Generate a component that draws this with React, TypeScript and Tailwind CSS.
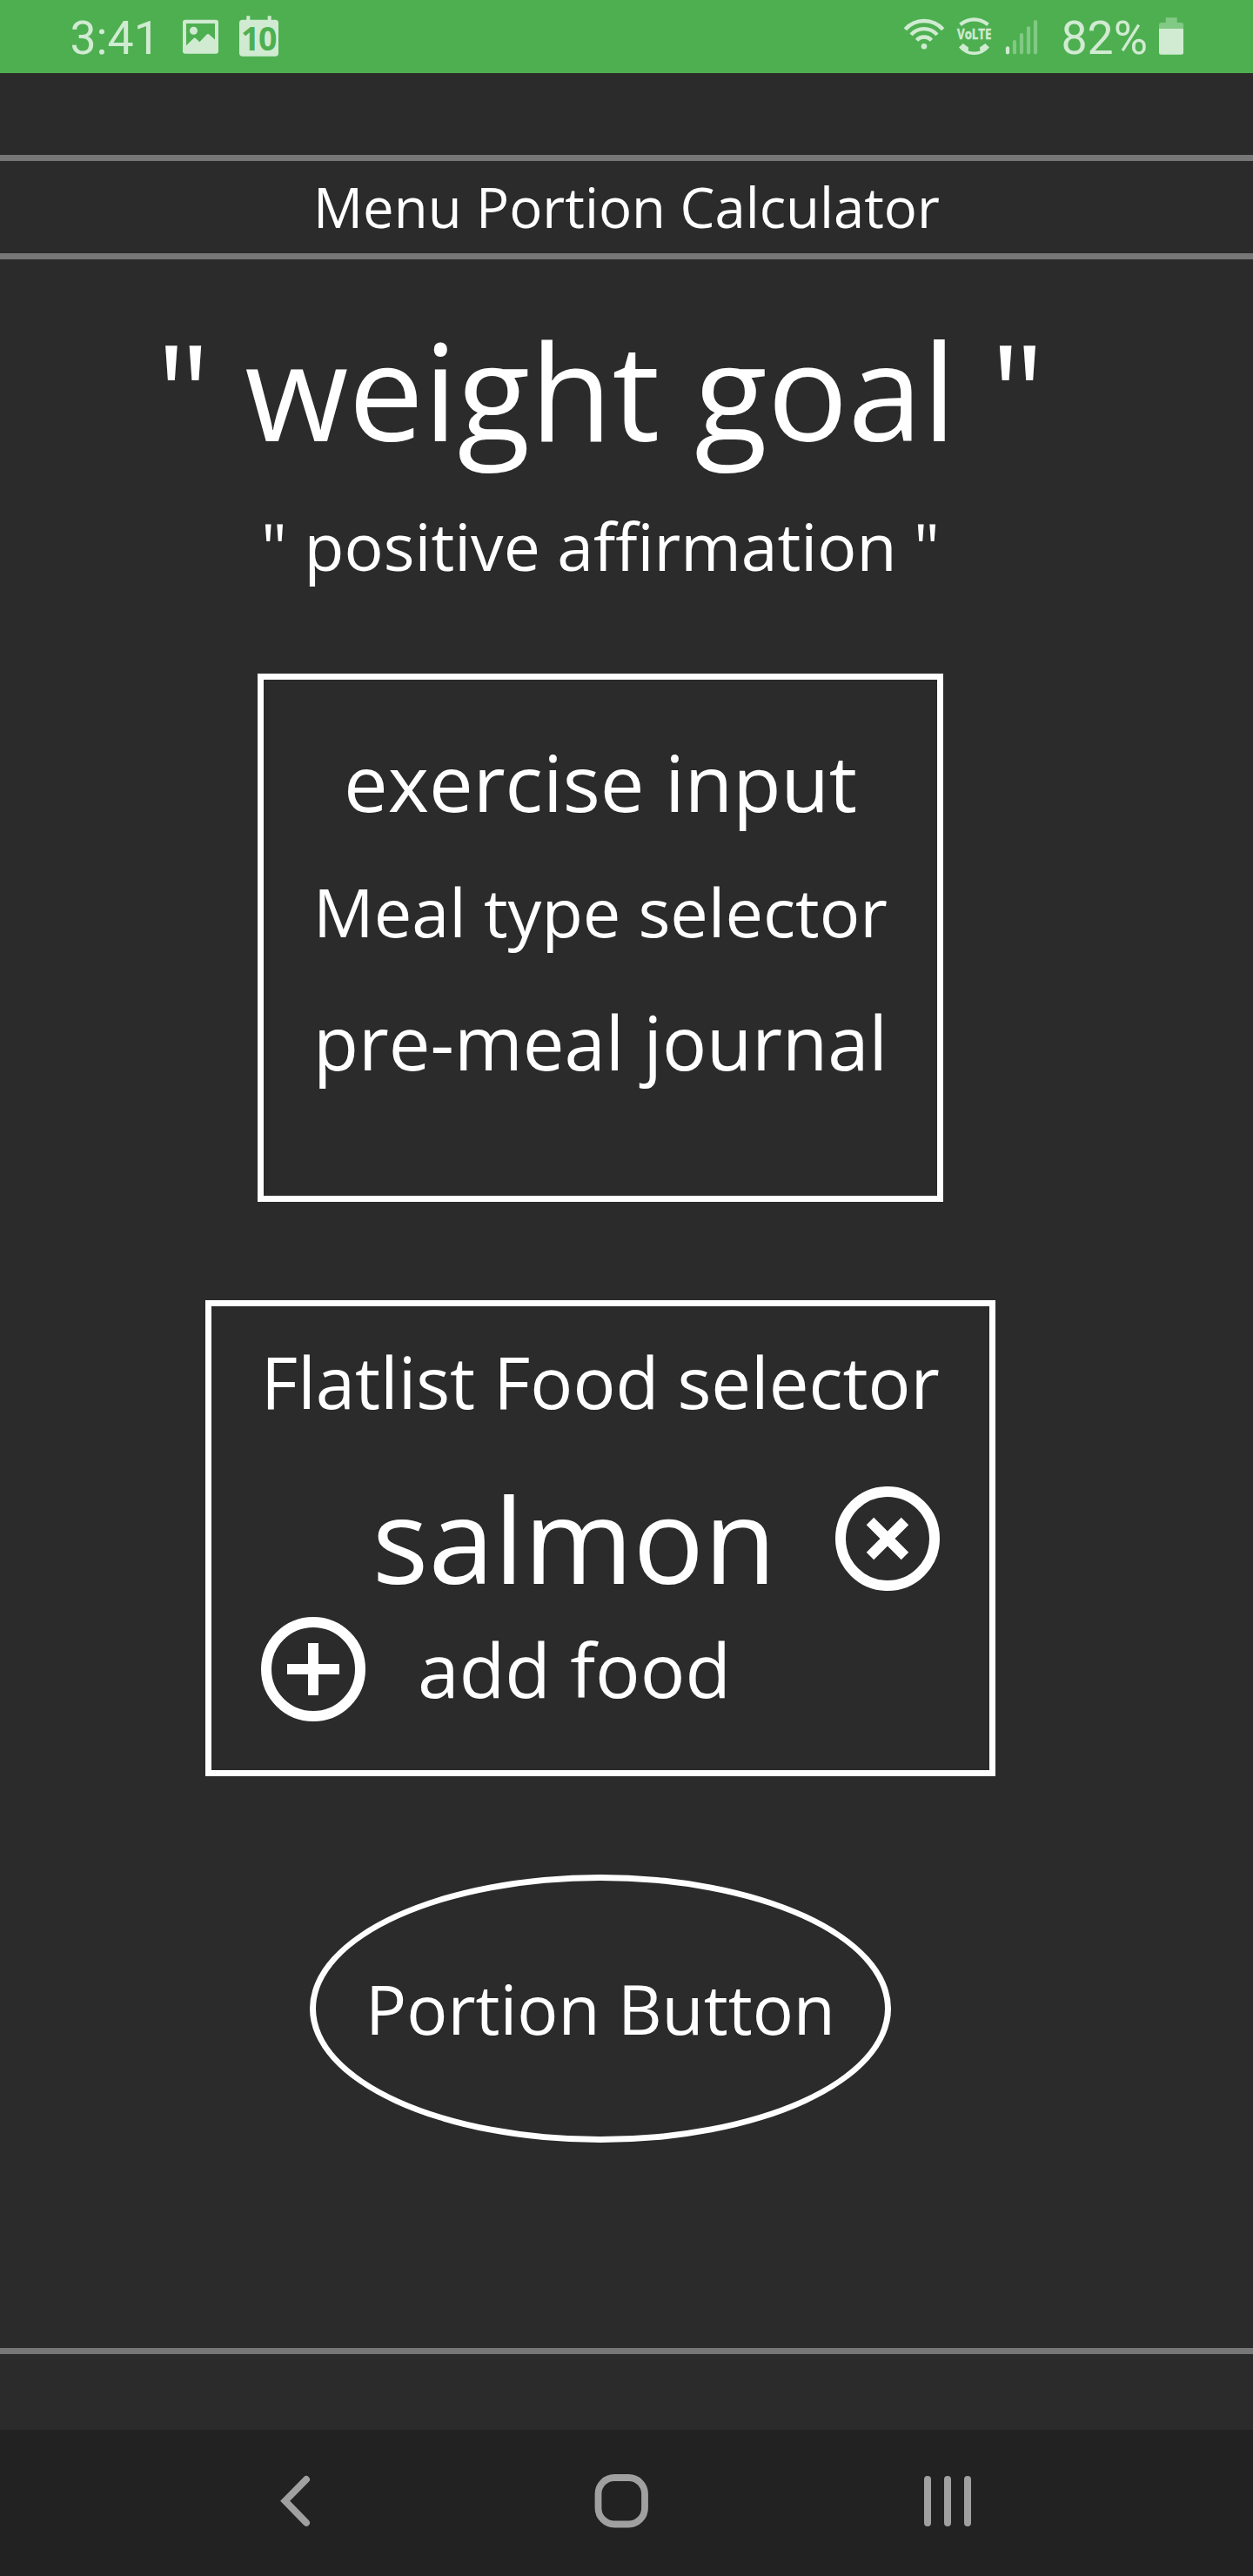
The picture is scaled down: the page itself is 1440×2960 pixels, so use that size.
import type { ReactNode } from "react";

function StatusBar() {
  return (
    <header className="flex h-[84px] items-start bg-[#4eaf51] pr-[80px] pl-[80.5px] font-['Roboto',sans-serif] text-[53.6px] leading-[87px] text-[#d0ebd1]">
      <span className="w-[129.5px] shrink-0">3:41</span>
      {/* Picture and calendar notifications */}
      <svg className="h-[84px] w-[112px] shrink-0" viewBox="210 0 112 84" fill="#d0ebd1">
        <path
          fillRule="evenodd"
          d="M213 22.7h35a3 3 0 0 1 3 3v33a3 3 0 0 1-3 3h-35a3 3 0 0 1-3-3v-33a3 3 0 0 1 3-3ZM214 27v25.3l8.3-8.1q1.4-1.2 2.8 0l4.3 4.1 8-8.6q1.6-1.5 3.2 0l6.4 5.8V27Z"
        />
        <circle cx="222.5" cy="35.3" r="4.5" />
        <path d="M283.3 22.7v-4.4h4v4.4h20.4v-4.4h4v4.4h4.6a3.7 3.7 0 0 1 3.7 3.7v34.6a3.7 3.7 0 0 1-3.7 3.7h-37.6a3.7 3.7 0 0 1-3.7-3.7V26.4a3.7 3.7 0 0 1 3.7-3.7Z" />
        <text
          x="297"
          y="57.7"
          textAnchor="middle"
          fill="#4eaf51"
          fontFamily="Open Sans"
          fontWeight="700"
          fontSize="37.5"
          letterSpacing="-1.5"
        >
          10
        </text>
      </svg>
      {/* Wi-Fi, VoLTE and signal strength */}
      <svg className="ml-auto h-[84px] w-[156px] shrink-0" viewBox="1038 0 156 84" fill="none" stroke="#d0ebd1">
        <g strokeWidth="4.4">
          <path d="M1040.3 33.8a29 29 0 0 1 43.4 0" />
          <path d="M1047 39.9a20 20 0 0 1 30 0" />
          <path d="M1053.5 46.3a11.5 11.5 0 0 1 17 0" />
        </g>
        <circle cx="1062" cy="53.3" r="3.3" fill="#d0ebd1" stroke="none" />
        <path d="M1103.500 28.200q16-11.600 32 0" strokeWidth="4.200" />
        <text
          x="1100"
          y="45.2"
          textLength="39.5"
          lengthAdjust="spacingAndGlyphs"
          fill="#d0ebd1"
          stroke="#d0ebd1"
          strokeWidth="0.4"
          fontFamily="Open Sans"
          fontWeight="700"
          fontSize="15.8"
        >
          VoLTE
        </text>
        <path
          d="M1102 54.5l4.8-4.5 6.2 4.6-.3 4q6.8 2 13.7 0l-.4-4 6.3-4.6 4.7 4.5q-7.2 8.5-17.5 8.5t-17.5-8.5Z"
          fill="#d0ebd1"
          stroke="none"
        />
        <path d="M1158 55.3v5" strokeWidth="4.2" strokeLinecap="round" />
        <path d="M1166 48v12.3M1174 40v20.3M1182 32.3v28M1190 25v35.3" stroke="#82c985" strokeWidth="4.2" strokeLinecap="round" />
      </svg>
      <span className="ml-[25.5px] shrink-0">82%</span>
      <svg className="ml-[13px] h-[84px] w-[28px] shrink-0" viewBox="1332 0 28 84">
        <path d="M1332 33v-4.500a2.500 2.500 0 0 1 2.500-2.500h5.200v-5.700h13v5.700h4.800a2.500 2.500 0 0 1 2.500 2.500v4.500Z" fill="#82c985" />
        <path d="M1332 33h28v27.200a2.500 2.500 0 0 1-2.500 2.500h-23a2.500 2.500 0 0 1-2.500-2.500Z" fill="#d0ebd1" />
      </svg>
    </header>
  );
}

function Row({ className, children }: { className: string; children: ReactNode }) {
  return <div className={`flex items-center justify-center whitespace-nowrap leading-none ${className}`}>{children}</div>;
}

function RemoveIcon() {
  return (
    <svg className="size-[120px] shrink-0" viewBox="0 0 120 120" fill="none" stroke="#fff" strokeWidth="12">
      <circle cx="60" cy="60" r="54" />
      <path d="M40 40l40 40M80 40l-40 40" />
    </svg>
  );
}

function AddIcon() {
  return (
    <svg className="size-[120px] shrink-0" viewBox="0 0 120 120" fill="none" stroke="#fff" strokeWidth="12">
      <circle cx="60" cy="60" r="54" />
      <path d="M60 30v60M30 60h60" />
    </svg>
  );
}

function NavBar() {
  return (
    <nav className="flex h-[168px] items-start bg-[#222222] pt-[50px] pl-[321px]">
      <svg className="h-[64px] w-[36px]" viewBox="321 2842 36 64" fill="none" stroke="#a0a0a0">
        <path d="M352 2849l-24.300 24.800 24.300 25" strokeWidth="8" strokeLinecap="round" />
      </svg>
      <svg className="ml-[326px] h-[64px] w-[64px]" viewBox="683 2842 64 64" fill="none" stroke="#a0a0a0">
        <rect x="687.5" y="2847" width="53.500" height="53.500" rx="18.500" strokeWidth="7.800" />
      </svg>
      <svg className="ml-[314px] h-[64px] w-[57px]" viewBox="1061 2842 57 64" fill="none" stroke="#a0a0a0">
        <path d="M1066 2849v50M1089 2849v50M1112 2849v50" strokeWidth="8" strokeLinecap="round" />
      </svg>
    </nav>
  );
}

export default function App() {
  return (
    <div className="flex h-[2960px] w-[1440px] flex-col overflow-hidden bg-[#2b2b2b] font-['Open_Sans','Noto_Sans',sans-serif] text-white">
      <StatusBar />

      <h1 className="mt-[94px] flex h-[120px] shrink-0 items-center justify-center border-y-[7px] border-[#777777] text-[63.45px] leading-none">
        Menu Portion Calculator
      </h1>

      <main className="flex grow flex-col items-center pr-[60px]">
        <Row className="h-[300px] text-[153.85px]">&quot; weight goal &quot;</Row>
        <Row className="h-[60px] text-[75.12px]">&quot; positive affirmation &quot;</Row>

        <section className="mt-[116px] h-[607px] w-[788px] border-[7px] border-white pt-[42px]">
          <Row className="h-[150px] text-[90.35px]">exercise input</Row>
          <Row className="h-[150px] text-[77.49px]">Meal type selector</Row>
          <Row className="h-[150px] text-[85.1px]">pre-meal journal</Row>
        </section>

        <section className="mt-[113px] h-[547px] w-[908px] border-[7px] border-white px-[57px] pt-[27px]">
          <Row className="h-[120px] text-[81.53px]">Flatlist Food selector</Row>
          <div className="mt-[60px] flex h-[120px] items-center justify-end gap-[60px]">
            <Row className="w-[480px] text-[135.6px]">salmon</Row>
            <RemoveIcon />
          </div>
          <div className="mt-[30px] flex h-[120px] items-center gap-[60px]">
            <AddIcon />
            <Row className="w-[360px] text-[85.92px]">add food</Row>
          </div>
        </section>

        <button className="mt-[113px] flex h-[308px] w-[668px] items-center justify-center rounded-[50%] border-[7px] border-white text-[78.46px] leading-none whitespace-nowrap">
          Portion Button
        </button>
      </main>

      <div className="h-[94px] shrink-0 border-t-[7px] border-[#777777]" />
      <NavBar />
    </div>
  );
}
